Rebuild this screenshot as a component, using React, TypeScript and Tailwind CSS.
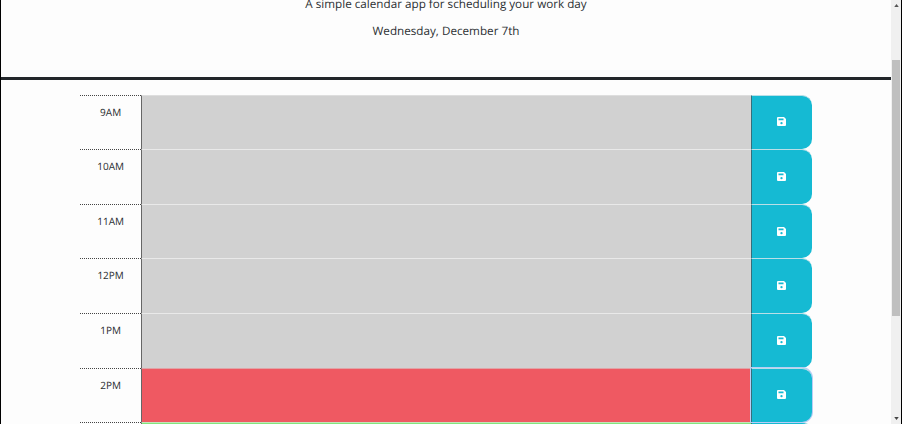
import React from "react";

type Hour = { label: string; color: string; focused?: boolean };

const hours: Hour[] = [
  { label: "9AM", color: "border-t-[#dedede] bg-[#d1d1d1]" },
  { label: "10AM", color: "border-t-[#e9e9e9] bg-[#d1d1d1]" },
  { label: "11AM", color: "border-t-[#e9e9e9] bg-[#d1d1d1]" },
  { label: "12PM", color: "border-t-[#e9e9e9] bg-[#d1d1d1]" },
  { label: "1PM", color: "border-t-[#e9e9e9] bg-[#d1d1d1]" },
  { label: "2PM", color: "border-t-[#e0a3a6] bg-[#ef5962]", focused: true },
  { label: "", color: "border-t-[#c5e3ba] bg-[#82e47d]" },
];

function SaveIcon() {
  return (
    <svg viewBox="0 0 18 18" className="-mt-px h-[9px] w-[9px]" fill="currentColor" fillRule="evenodd">
      <path d="M2 0h12l4 4v12a2 2 0 0 1-2 2H2a2 2 0 0 1-2-2V2a2 2 0 0 1 2-2zM3 3v3.500h10V3zM9 10a2.300 2.300 0 1 0 0 4.600a2.300 2.300 0 1 0 0-4.600z" />
    </svg>
  );
}

function TimeBlock({ hour }: { hour: Hour }) {
  return (
    <div className="flex h-[54.6px] shrink-0">
      <div className="w-[60.500px] border-t border-dotted border-[#444] pt-[9px] text-center text-[10px] leading-[14px] text-[#2b2f32]">
        {hour.label}
      </div>
      <div className={`w-[610px] border-l border-t border-l-[#666] ${hour.color}`} />
      <button
        className={`flex w-[61px] items-center justify-center rounded-r-[10px] border-l border-t border-l-[#356f7b] border-t-[#b9dfe7] bg-[#15bad3] text-white ${
          hour.focused ? "relative shadow-[0_0_0_1px_#b9cdf5]" : ""
        }`}
      >
        <SaveIcon />
      </button>
    </div>
  );
}

export default function App() {
  return (
    <div className="flex h-[424px] w-[902px] overflow-hidden border-x border-black bg-[#fdfdfd] font-['Open_Sans',sans-serif] [text-rendering:geometricPrecision]">
      <main className="flex min-w-0 flex-1 flex-col overflow-hidden">
        <header className="h-[80px] shrink-0 border-b-[3px] border-[#22262a] text-center text-[11.700px] leading-[18px] text-[#2b2f32]">
          <p className="-mt-[5px]">A simple calendar app for scheduling your work day</p>
          <p className="mt-[9px]">Wednesday, December 7th</p>
        </header>
        <div className="ml-[79.400px] mt-[14.700px] flex flex-col">
          {hours.map((hour, index) => (
            <TimeBlock key={index} hour={hour} />
          ))}
        </div>
      </main>
      <aside className="flex w-[10px] flex-col items-center justify-between bg-[#f0f0f0]">
        <svg viewBox="0 0 6 4" className="mt-[4px] h-[3px] w-[5px]" fill="#555">
          <path d="M3 0L6 4H0z" />
        </svg>
        <div className="mt-[53px] h-[256px] w-[8px] bg-[#bfbfbf]" />
        <svg viewBox="0 0 6 4" className="mb-[4px] mt-auto h-[3px] w-[5px]" fill="#444">
          <path d="M0 0h6L3 4z" />
        </svg>
      </aside>
    </div>
  );
}
